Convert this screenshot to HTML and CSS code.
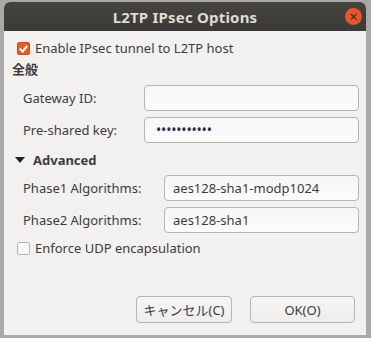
FILE: index.html
```
<!DOCTYPE html>
<html lang="en">
<head>
    <meta charset="UTF-8">
    <title>L2TP IPsec Options</title>
    <link rel="stylesheet" href="styles.css">
</head>
<body>
    <div class="dialog">
        <div class="titlebar">
            <span class="title">L2TP IPsec Options</span>
            <span class="close">&#215;</span>
        </div>
        <div class="content">
            <label class="check">
                <span class="box on"></span>
                Enable IPsec tunnel to L2TP host
            </label>
            <div class="section">全般</div>
            <div class="row">
                <span class="label">Gateway ID:</span>
                <span class="entry wide"></span>
            </div>
            <div class="row">
                <span class="label">Pre-shared key:</span>
                <span class="entry wide dots">&#8226;&#8226;&#8226;&#8226;&#8226;&#8226;&#8226;&#8226;&#8226;&#8226;&#8226;</span>
            </div>
            <div class="expander">
                <span class="arrow"></span>
                Advanced
            </div>
            <div class="row">
                <span class="label">Phase1 Algorithms:</span>
                <span class="entry narrow">aes128-sha1-modp1024</span>
            </div>
            <div class="row">
                <span class="label">Phase2 Algorithms:</span>
                <span class="entry narrow">aes128-sha1</span>
            </div>
            <label class="check lower">
                <span class="box"></span>
                Enforce UDP encapsulation
            </label>
            <div class="buttons">
                <button class="btn cancel">キャンセル(C)</button>
                <button class="btn ok">OK(O)</button>
            </div>
        </div>
    </div>
</body>
</html>
```

FILE: styles.css
```
body {
    margin: 0;
    background: #a9a9a7;
    font-family: "Noto Sans", "Noto Sans CJK JP", sans-serif;
    font-size: 13px;
    color: #3c3c3c;
    height: 338px;
    overflow: hidden;
}
.dialog {
    margin: 2px 0 0 4px;
    width: 362px;
    height: 333px;
    background: #f2f1f0;
    border-radius: 6px 6px 0 0;
    overflow: hidden;
}
.titlebar {
    height: 29px;
    background: linear-gradient(#45443f, #3b3a36);
    display: flex;
    align-items: center;
    justify-content: center;
    position: relative;
}
.title {
    color: #dfdbd2;
    font-weight: bold;
    font-size: 15px;
    letter-spacing: 0.2px;
}
.close {
    position: absolute;
    right: 4px;
    top: 6px;
    width: 17px;
    height: 17px;
    border-radius: 50%;
    background: #e5562c;
    color: #3a2a22;
    font-size: 15px;
    line-height: 16px;
    text-align: center;
}
.content {
    padding: 7px 7px 0 8px;
}
.check {
    display: flex;
    align-items: center;
    gap: 5px;
    margin-left: 5px;
    height: 20px;
}
.check.lower {
    margin-top: 2px;
}
.box {
    width: 11px;
    height: 11px;
    border: 1px solid #b9b7b3;
    border-radius: 2px;
    background: #f8f8f7;
}
.box.on {
    background: #e0602b;
    border-color: #c9501f;
    position: relative;
}
.box.on::after {
    content: "";
    position: absolute;
    left: 3px;
    top: 1px;
    width: 3px;
    height: 6px;
    border: solid #fff;
    border-width: 0 2px 2px 0;
    transform: rotate(40deg);
}
.section {
    font-weight: bold;
    height: 24px;
    line-height: 22px;
}
.row {
    display: flex;
    align-items: center;
    justify-content: space-between;
    height: 32px;
    padding-left: 11px;
}
.entry {
    box-sizing: border-box;
    height: 26px;
    border: 1px solid #b6b4b0;
    border-radius: 4px;
    background: linear-gradient(#f6f6f6, #fcfcfc);
    padding: 0 8px;
    line-height: 24px;
}
.wide {
    width: 215px;
}
.narrow {
    width: 195px;
}
.dots {
    font-size: 14px;
    letter-spacing: -0.2px;
    padding-left: 11px;
    color: #2c2c44;
}
.expander {
    display: flex;
    align-items: center;
    gap: 8px;
    font-weight: bold;
    height: 24px;
    margin-left: 3px;
    margin-top: 2px;
}
.arrow {
    width: 0;
    height: 0;
    border-left: 5px solid transparent;
    border-right: 5px solid transparent;
    border-top: 6px solid #222;
}
.buttons {
    display: flex;
    justify-content: flex-end;
    gap: 18px;
    margin-top: 38px;
    padding-right: 4px;
}
.btn {
    height: 27px;
    border: 1px solid #b7b5b1;
    border-radius: 4px;
    background: linear-gradient(#f6f5f4, #eeedec);
    font-family: inherit;
    font-size: 13px;
    color: #3c3c3c;
}
.cancel {
    width: 96px;
}
.ok {
    width: 105px;
}
```
